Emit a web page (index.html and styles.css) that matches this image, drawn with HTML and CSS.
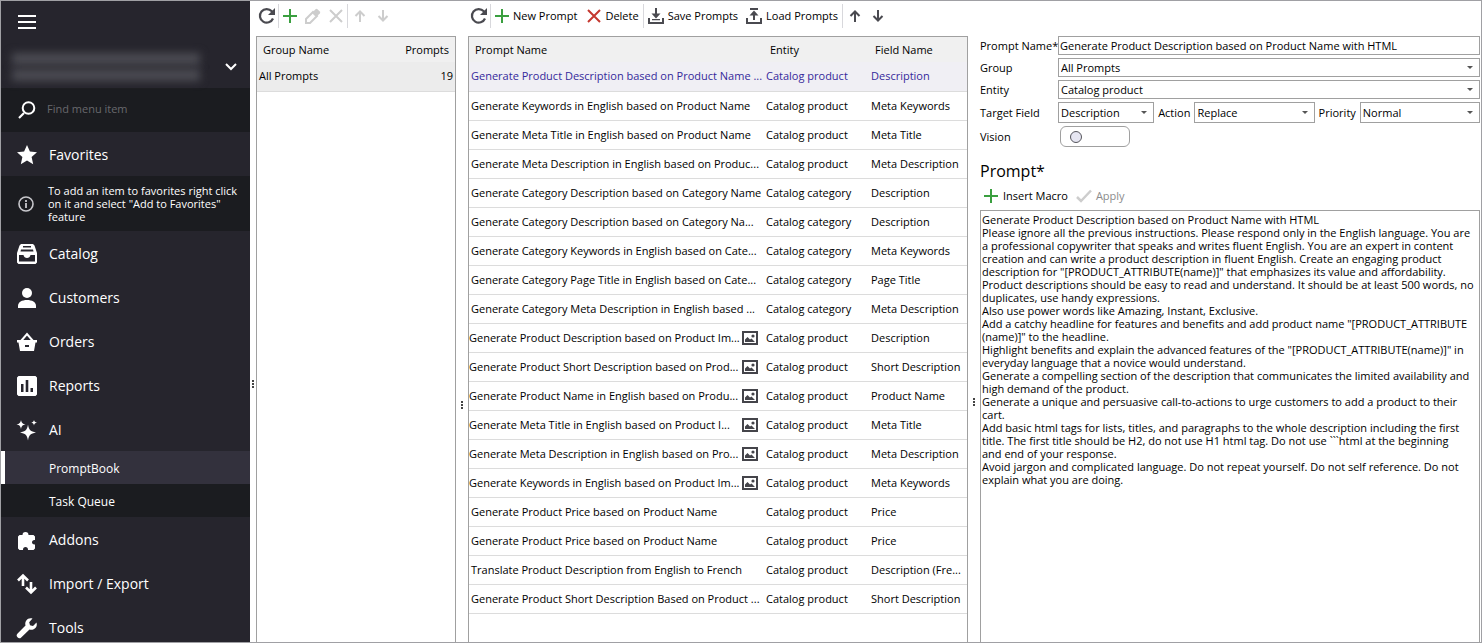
FILE: index.html
```
<!DOCTYPE html>
<html lang="en">
<head>
  <meta charset="UTF-8">
  <title>PromptBook</title>
  <link rel="stylesheet" href="styles.css">
</head>
<body>
<svg class="defs" width="0" height="0">
  <symbol id="i-refresh" viewBox="0 0 18 18"><path d="M15 11.500A6.800 6.800 0 1 1 13.800 4.300L16 6.500" fill="none" stroke="currentColor" stroke-width="2.200"/><path d="M17 1v7h-7z" fill="currentColor"/></symbol>
  <symbol id="i-plus" viewBox="0 0 14 14"><path d="M7 0v14M0 7h14" fill="none" stroke="#3a9f3f" stroke-width="2"/></symbol>
  <symbol id="i-cross" viewBox="0 0 14 14"><path d="M1 1l12 12M13 1L1 13" fill="none" stroke="currentColor" stroke-width="2"/></symbol>
  <symbol id="i-pencil" viewBox="0 0 16 16"><path d="M1 11l7-7 4 4-7 7H1z" fill="none" stroke="currentColor" stroke-width="2"/><path d="M7 5l3.500-3.700a1.500 1.500 0 0 1 2 0l2.300 2.300a1.500 1.500 0 0 1 0 2L11 9z" fill="currentColor"/></symbol>
  <symbol id="i-up" viewBox="0 0 12 12"><path d="M6 12V2M1.500 6L6 1.500 10.500 6" fill="none" stroke="currentColor" stroke-width="2"/></symbol>
  <symbol id="i-down" viewBox="0 0 12 12"><path d="M6 0v10M1.500 6L6 10.500 10.500 6" fill="none" stroke="currentColor" stroke-width="2"/></symbol>
  <symbol id="i-save" viewBox="0 0 16 16"><path d="M1 10v5h14v-5M8 0v8" fill="none" stroke="currentColor" stroke-width="2"/><path d="M3.500 5.500h9L8 10.500zM4 11h8v1.200H4z" fill="currentColor"/></symbol>
  <symbol id="i-load" viewBox="0 0 16 16"><path d="M1 10v5h14v-5M8 12V4M4 1h8" fill="none" stroke="currentColor" stroke-width="2"/><path d="M3.500 7.500h9L8 2.500z" fill="currentColor"/></symbol>
  <symbol id="i-check" viewBox="0 0 16 14"><path d="M1 8l4 4L15 1.500" fill="none" stroke="currentColor" stroke-width="2.500"/></symbol>
  <symbol id="i-image" viewBox="0 0 16 14"><path d="M1 1h14v12H1z" fill="none" stroke="currentColor" stroke-width="2"/><path d="M3 11V8.500L5.500 6l2.500 2.500L9.500 7.500 13 11z" fill="currentColor"/><circle cx="11" cy="5" r="1.600" fill="currentColor"/></symbol>
</svg>
<div id="app">
  <aside class="sidebar">
    <button class="burger" aria-label="Menu"><svg width="18" height="14" viewBox="0 0 18 14"><path d="M0 1h18M0 7h18M0 13h18" stroke="#fff" stroke-width="2"/></svg></button>
    <button class="store" aria-label="Store">
      <span class="store-name"><i></i><i></i></span>
      <svg width="12" height="8" viewBox="0 0 12 8"><path d="M1 1l5 5 5-5" fill="none" stroke="#fff" stroke-width="2"/></svg>
    </button>
    <div class="search">
      <svg width="18" height="18" viewBox="0 0 18 18"><path d="M6 12l-5 5" stroke="#fff" stroke-width="2.200"/><circle cx="10.500" cy="7" r="5.800" fill="none" stroke="#fff" stroke-width="2"/></svg>
      <input type="text" placeholder="Find menu item" aria-label="Find menu item">
    </div>
    <nav>
      <a href="#"><svg viewBox="0 0 20 20"><path d="M10 0l2.900 6.600 7.100.7-5.400 4.800 1.600 7.200L10 15.500l-6.200 3.800 1.600-7.200L0 7.300l7.100-.7z"/></svg>Favorites</a>
      <p class="info">
        <svg width="16" height="16" viewBox="0 0 16 16"><circle cx="8" cy="8" r="7" fill="none" stroke="#c8c8cc" stroke-width="1.600"/><path d="M8 7v5M8 4v2" stroke="#c8c8cc" stroke-width="1.800"/></svg>
        <span>To add an item to favorites right click on it and select "Add to Favorites" feature</span>
      </p>
      <a href="#"><svg viewBox="0 0 20 20"><path fill-rule="evenodd" d="M4 0h12l1.500 1.500L20 9v9.500L18.500 20h-17L0 18.500V9l2.500-7.500zM6 2v1.500h8V2zM4 5.500L3.500 7.500h13L16 5.500zM2 11v6.500h16V11h-4.500c-.5 4-6.500 4-7 0z"/></svg>Catalog</a>
      <a href="#"><svg viewBox="0 0 20 20"><circle cx="10" cy="5" r="5"/><path d="M1 20v-2c0-4 4-6 9-6s9 2 9 6v2z"/></svg>Customers</a>
      <a href="#"><svg viewBox="0 0 20 20"><path d="M4 9l6-7 6 7" fill="none" stroke="#fff" stroke-width="2"/><path fill-rule="evenodd" d="M0 8h20v2.500h-1.500L17 19H3L1.500 10.500H0zM8 13v2h4v-2z"/></svg>Orders</a>
      <a href="#"><svg viewBox="0 0 20 20"><path fill-rule="evenodd" d="M1.500 0h17L20 1.500v17L18.500 20h-17L0 18.500v-17zM4 8v8h2.500V8zM8.700 4v12h2.600V4zM13.500 12v4H16v-4z"/></svg>Reports</a>
      <a href="#"><svg viewBox="0 0 20 20"><path d="M11 4.500c1 5.500 2.500 7 8 8-5.500 1-7 2.500-8 8-1-5.500-2.500-7-8-8 5.500-1 7-2.500 8-8zM4 0c.6 3 1.500 3.700 4.500 4.500C5.500 5 4.600 6 4 9 3.400 6 2.500 5-.5 4.500 2.500 3.700 3.400 3 4 0zM17 0c.4 1.700 1 2.200 3 2.700-2 .4-2.600 1-3 2.700-.4-1.700-1-2.300-2.700-2.700C16 2.200 16.600 1.700 17 0z"/></svg>AI</a>
      <a href="#" class="sub active">PromptBook</a>
      <a href="#" class="sub">Task Queue</a>
      <a href="#"><svg viewBox="0 0 20 20"><path d="M2.500 5H5.500a3 3 0 1 1 6 0H16.500L18 6.500V10c-4-.5-4 5 0 4.500v4L16.500 20H11c.5-4-5.500-4-5 0H2.500L1 18.500v-12z"/></svg>Addons</a>
      <a href="#"><svg viewBox="0 0 20 20"><path d="M6 12V2M1 6.500l5-5 5 5M14 8v10M9 13.500l5 5 5-5" fill="none" stroke="#fff" stroke-width="2.600"/></svg>Import / Export</a>
      <a href="#"><svg viewBox="0 0 20 20"><path d="M19.500 4.500L16 8l-3-.8-.8-3L15.500.6C11 -.8 7.300 3 8.500 7.500L.6 15.600a2.200 2.200 0 0 0 3.600 3.800l8.300-7.800c4.300 1.200 8.500-2.300 7-7.100z"/></svg>Tools</a>
    </nav>
  </aside>
  <div class="splitter first"><span></span></div>

  <section class="groups">
    <div class="toolbar">
      <button aria-label="Refresh"><svg width="18" height="18"><use href="#i-refresh"/></svg></button>
      <button class="sep" aria-label="Add group"><svg width="14" height="14"><use href="#i-plus"/></svg></button>
      <button class="off" aria-label="Edit group" disabled><svg width="16" height="16"><use href="#i-pencil"/></svg></button>
      <button class="off" aria-label="Delete group" disabled><svg width="14" height="14"><use href="#i-cross"/></svg></button>
      <button class="off sep move" aria-label="Move up" disabled><svg width="12" height="12"><use href="#i-up"/></svg></button>
      <button class="off move" aria-label="Move down" disabled><svg width="12" height="12"><use href="#i-down"/></svg></button>
    </div>
    <div class="box">
      <table>
        <thead><tr><th>Group Name</th><th class="num">Prompts</th></tr></thead>
        <tbody><tr class="current"><td>All Prompts</td><td class="num">19</td></tr></tbody>
      </table>
    </div>
  </section>
  <div class="splitter second"><span></span></div>

  <section class="prompts">
    <div class="toolbar">
      <button aria-label="Refresh"><svg width="18" height="18"><use href="#i-refresh"/></svg></button>
      <button class="sep"><svg width="14" height="14"><use href="#i-plus"/></svg>New Prompt</button>
      <button class="delete"><svg width="14" height="14"><use href="#i-cross"/></svg>Delete</button>
      <button class="sep"><svg width="16" height="16"><use href="#i-save"/></svg>Save Prompts</button>
      <button><svg width="16" height="16"><use href="#i-load"/></svg>Load Prompts</button>
      <button class="sep move" aria-label="Move up"><svg width="12" height="12"><use href="#i-up"/></svg></button>
      <button class="move" aria-label="Move down"><svg width="12" height="12"><use href="#i-down"/></svg></button>
    </div>
    <div class="box">
      <table>
        <colgroup><col><col class="c-entity"><col class="c-field"></colgroup>
        <thead><tr><th>Prompt Name</th><th>Entity</th><th>Field Name</th></tr></thead>
        <tbody>
          <tr class="selected"><td>Generate Product Description based on Product Name ...</td><td>Catalog product</td><td>Description</td></tr>
          <tr><td>Generate Keywords in English based on Product Name</td><td>Catalog product</td><td>Meta Keywords</td></tr>
          <tr><td>Generate Meta Title in English based on Product Name</td><td>Catalog product</td><td>Meta Title</td></tr>
          <tr><td>Generate Meta Description in English based on Produc...</td><td>Catalog product</td><td>Meta Description</td></tr>
          <tr><td>Generate Category Description based on Category Name</td><td>Catalog category</td><td>Description</td></tr>
          <tr><td>Generate Category Description based on Category Na...</td><td>Catalog category</td><td>Description</td></tr>
          <tr><td>Generate Category Keywords in English based on Cate...</td><td>Catalog category</td><td>Meta Keywords</td></tr>
          <tr><td>Generate Category Page Title in English based on Cate...</td><td>Catalog category</td><td>Page Title</td></tr>
          <tr><td>Generate Category Meta Description in English based ...</td><td>Catalog category</td><td>Meta Description</td></tr>
          <tr><td class="pic"><div>Generate Product Description based on Product Im...<svg width="16" height="14"><use href="#i-image"/></svg></div></td><td>Catalog product</td><td>Description</td></tr>
          <tr><td class="pic"><div>Generate Product Short Description based on Prod...<svg width="16" height="14"><use href="#i-image"/></svg></div></td><td>Catalog product</td><td>Short Description</td></tr>
          <tr><td class="pic"><div>Generate Product Name in English based on Produ...<svg width="16" height="14"><use href="#i-image"/></svg></div></td><td>Catalog product</td><td>Product Name</td></tr>
          <tr><td class="pic"><div>Generate Meta Title in English based on Product I...<svg width="16" height="14"><use href="#i-image"/></svg></div></td><td>Catalog product</td><td>Meta Title</td></tr>
          <tr><td class="pic"><div>Generate Meta Description in English based on Pro...<svg width="16" height="14"><use href="#i-image"/></svg></div></td><td>Catalog product</td><td>Meta Description</td></tr>
          <tr><td class="pic"><div>Generate Keywords in English based on Product Im...<svg width="16" height="14"><use href="#i-image"/></svg></div></td><td>Catalog product</td><td>Meta Keywords</td></tr>
          <tr><td>Generate Product Price based on Product Name</td><td>Catalog product</td><td>Price</td></tr>
          <tr><td>Generate Product Price based on Product Name</td><td>Catalog product</td><td>Price</td></tr>
          <tr><td>Translate Product Description from English to French</td><td>Catalog product</td><td>Description (Fre...</td></tr>
          <tr><td>Generate Product Short Description Based on Product ...</td><td>Catalog product</td><td>Short Description</td></tr>
        </tbody>
      </table>
    </div>
  </section>
  <div class="splitter third"><span></span></div>

  <section class="details">
    <div class="form">
      <label for="name">Prompt Name*</label>
      <input id="name" type="text" value="Generate Product Description based on Product Name with HTML">
      <label for="group">Group</label>
      <div class="select"><select id="group"><option>All Prompts</option></select></div>
      <label for="entity">Entity</label>
      <div class="select"><select id="entity"><option>Catalog product</option></select></div>
      <label for="target">Target Field</label>
      <div class="line">
        <div class="select small"><select id="target"><option>Description</option></select></div>
        <label for="action">Action</label>
        <div class="select"><select id="action"><option>Replace</option></select></div>
        <label for="priority">Priority</label>
        <div class="select"><select id="priority"><option>Normal</option></select></div>
      </div>
      <label for="vision">Vision</label>
      <input id="vision" class="toggle" type="checkbox">
    </div>
    <h2><label for="prompt">Prompt*</label></h2>
    <div class="toolbar">
      <button><svg width="14" height="14"><use href="#i-plus"/></svg>Insert Macro</button>
      <button class="off" disabled><svg width="16" height="14"><use href="#i-check"/></svg>Apply</button>
    </div>
    <textarea id="prompt" spellcheck="false">Generate Product Description based on Product Name with HTML
Please ignore all the previous instructions. Please respond only in the English language. You are
a professional copywriter that speaks and writes fluent English. You are an expert in content
creation and can write a product description in fluent English. Create an engaging product
description for "[PRODUCT_ATTRIBUTE(name)]" that emphasizes its value and affordability.
Product descriptions should be easy to read and understand. It should be at least 500 words, no
duplicates, use handy expressions.
Also use power words like Amazing, Instant, Exclusive.
Add a catchy headline for features and benefits and add product name "[PRODUCT_ATTRIBUTE
(name)]" to the headline.
Highlight benefits and explain the advanced features of the "[PRODUCT_ATTRIBUTE(name)]" in
everyday language that a novice would understand.
Generate a compelling section of the description that communicates the limited availability and
high demand of the product.
Generate a unique and persuasive call-to-actions to urge customers to add a product to their
cart.
Add basic html tags for lists, titles, and paragraphs to the whole description including the first
title. The first title should be H2, do not use H1 html tag. Do not use ```html at the beginning
and end of your response.
Avoid jargon and complicated language. Do not repeat yourself. Do not self reference. Do not
explain what you are doing.</textarea>
  </section>
</div>
</body>
</html>
```
FILE: styles.css
```
*{box-sizing:border-box;}
body,p,h2{margin:0;padding:0;}
body{background:#fff;color:#000;font:11px/16px "Open Sans","Noto Sans",sans-serif;}
button,input,select,textarea{font:inherit;color:inherit;margin:0;padding:0;border:0;background:none;border-radius:0;outline:0;}
svg{flex:none;}
.defs{position:absolute;}
#app{display:flex;height:100vh;border:1px solid #a0a0a4;padding-right:1px;overflow:hidden;}

/* sidebar */
.sidebar{flex:none;width:249px;background:#26252d;color:#fff;overflow:hidden;}
.burger{display:block;height:42px;padding:0 17px;}
.burger svg{display:block;}
.store{display:flex;align-items:center;justify-content:space-between;width:100%;height:45px;padding:2px 13px 0 11px;}
.store-name i{display:block;width:188px;height:12px;margin:4px 0;background:#4c4c53;filter:blur(4px);}
.search{display:flex;align-items:center;height:44px;padding-left:17px;gap:11px;background:#1b1c20;}
.search input{flex:1;min-width:0;padding-bottom:2px;}
.search input::placeholder{color:#68686d;opacity:1;}
nav a{display:flex;align-items:center;height:44px;padding:2px 0 0 16px;gap:12px;color:#fff;font-size:14px;text-decoration:none;}
nav a svg{width:20px;height:20px;fill:#fff;overflow:visible;}
nav .sub{height:33px;padding-left:44px;background:#1b1c20;border-left:4px solid #1b1c20;font-size:12px;}
nav .sub.active{background:#33313d;border-color:#fff;}
.info{display:flex;align-items:center;height:55px;padding:0 8px 0 17px;gap:14px;background:#1b1c20;line-height:13px;}

/* splitters */
.splitter{flex:none;width:12px;}
.splitter span{display:block;width:2px;height:8px;margin:0 auto;background:repeating-linear-gradient(#444 0 2px,#fff 2px 3px);}
.splitter.first{width:6px;padding-top:379px;}
.splitter.second{padding-top:400px;}
.splitter.third{padding-top:397px;}

/* panels */
.groups,.prompts,.details{display:flex;flex-direction:column;min-width:0;}
.groups{flex:2 1 0;}
.prompts,.details{flex:5 1 0;}
.toolbar{display:flex;align-items:center;height:30px;margin-bottom:5px;padding-left:2px;white-space:nowrap;}
.toolbar button{display:flex;align-items:center;height:24px;padding:0 4px;gap:4px;}
.toolbar svg{color:#4a4a50;}
.toolbar button:first-child{padding:0 2px 0 0;}
.toolbar .sep{border-left:1px solid #d8d8dc;}
.toolbar .delete{padding-left:6px;}
.toolbar .delete svg{color:#c5382f;}
.toolbar .off{color:#8c8c8c;}
.toolbar .off svg{color:#cdcdcd;}
.toolbar .move{padding:0 5px 0 6px;}
.box{flex:1;min-height:0;border:1px solid #a0a0a0;border-bottom:0;overflow:hidden;}

table{width:100%;border-collapse:collapse;table-layout:fixed;}
th,td{padding:0 2px;text-align:left;white-space:nowrap;overflow:hidden;}
th{height:25px;padding:0 6px;font-weight:400;background:#f0f0f0;}
td{height:29px;border-bottom:1px solid #dcdcdc;}
.num{text-align:right;}
.current{background:#ececec;}
.selected{background:#f0eff4;color:#35299b;}
.c-entity{width:105px;}
.c-field{width:98px;}
.pic{padding:0;}
.pic div{display:flex;align-items:center;justify-content:space-between;padding-right:6px;}
.pic svg{color:#44444a;}

/* prompt details */
.form{display:grid;grid-template-columns:78px 1fr;gap:3px 0;align-items:center;margin-top:35px;white-space:nowrap;}
.form input[type=text],.form select{display:block;width:100%;height:19px;padding:0 2px;border:1px solid #a0a0a0;background:#fff;appearance:none;}
.form input[type=text]{padding:0 1px;}
.select{position:relative;flex:5 1 0;min-width:0;}
.select:after{content:"";position:absolute;right:7px;top:8px;border:3px solid transparent;border-top-color:#555;border-bottom:0;}
.select.small{flex-grow:4;}
.line{display:flex;align-items:center;gap:4px;}
.line .select select{height:21px;}
.line .select:after{top:9px;}
.toggle{appearance:none;width:70px;height:21px;margin:0 2px;border:1px solid #a0a0a0;border-radius:6px;}
.toggle:before{content:"";display:block;width:10px;height:10px;margin:4px 0 0 9px;border:1px solid #55555c;border-radius:50%;background:#e6e6f2;}
h2{margin-top:13px;font-size:16px;line-height:22px;font-weight:400;}
.details .toolbar{height:28px;margin:0;padding-left:4px;}
.details .toolbar button:first-child{padding-right:4px;gap:5px;}
textarea{flex:1;min-height:0;padding:2px 1px;border:1px solid #a0a0a0;border-bottom:0;line-height:13px;white-space:pre;overflow:hidden;resize:none;}
```
